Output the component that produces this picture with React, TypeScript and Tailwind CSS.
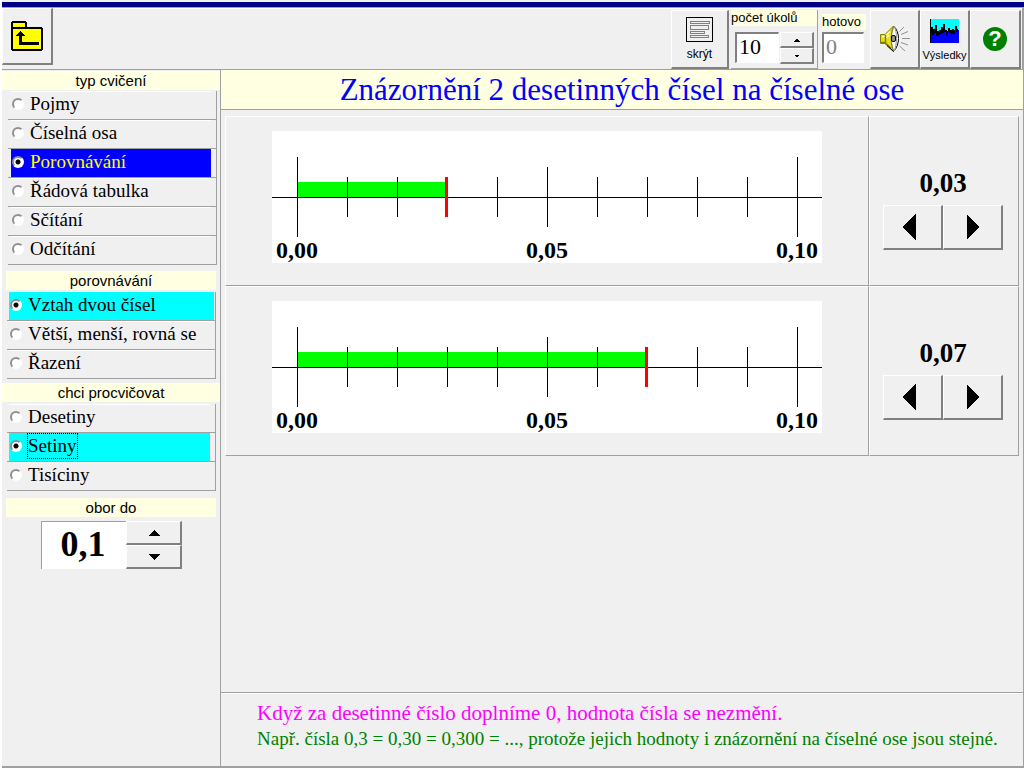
import { useState } from "react";
import clsx from "clsx";

const raised =
  "bg-[#f0f0f0] border-t border-l border-r-2 border-b-2 border-t-white border-l-white border-r-[#808080] border-b-[#808080] active:border-t-[#808080] active:border-l-[#808080]";

const sunken =
  "bg-white border-t-2 border-l-2 border-r border-b border-t-[#808080] border-l-[#808080] border-r-white border-b-white outline-none";

type RadioListProps = {
  name: string;
  title: string;
  items: string[];
  value: string;
  onChange: (v: string) => void;
  // primary list is highlighted in blue, the others in cyan
  primary?: boolean;
  focused?: boolean;
};

function RadioList({ name, title, items, value, onChange, primary, focused }: RadioListProps) {
  return (
    <section role="radiogroup" aria-label={title}>
      <Heading wide={name !== "relation"}>{title}</Heading>
      <div className={clsx("border-r border-[#a0a0a0]", primary ? "mt-px mr-[3px] ml-1.5" : "mt-0.5 mr-1 ml-[5px]")}>
        {items.map((item) => {
          const active = item === value;
          return (
            <label key={item} className="flex h-[29px] border-b border-[#a0a0a0]">
              <span
                className={clsx(
                  "flex flex-1 items-center gap-1.5 border-t pb-[3px] text-[19px] leading-6",
                  primary ? "ml-[3px] pl-px" : "ml-0.5 pl-px",
                  primary || focused ? "mr-[5px]" : "mr-px",
                  active
                    ? primary
                      ? "border-t-[#0000ff] bg-[#0000ff] text-[#ffff00]"
                      : "border-t-[#00ffff] bg-[#00ffff]"
                    : "border-t-white"
                )}
              >
                <input
                  type="radio"
                  name={name}
                  checked={active}
                  onChange={() => onChange(item)}
                  className="size-3 shrink-0 appearance-none rounded-full border-2 border-t-[#909090] border-l-[#909090] border-r-white border-b-white bg-white outline-none checked:bg-[radial-gradient(circle,#000_2px,#fff_3px)]"
                />
                <span className={clsx(active && focused && "outline-1 outline-dotted outline-black")}>{item}</span>
              </span>
            </label>
          );
        })}
      </div>
    </section>
  );
}

function Heading({ children, wide }: { children: string; wide?: boolean }) {
  return (
    <h2
      className={clsx(
        "h-[19px] bg-[#ffffe1] text-center font-['Liberation_Sans'] text-[15px] leading-[19px]",
        wide ? "" : "mx-1"
      )}
    >
      {children}
    </h2>
  );
}

function Triangle({ dir, size }: { dir: "up" | "down" | "left" | "right"; size: number }) {
  const points = {
    up: "0,9 6,3 12,9",
    down: "0,3 6,9 12,3",
    left: "9,0 3,6 9,12",
    right: "3,0 9,6 3,12",
  };
  return (
    <svg width={size} height={size} viewBox="0 0 12 12" shapeRendering="crispEdges" aria-hidden="true">
      <polygon points={points[dir]} />
    </svg>
  );
}

function NumberLine({ value }: { value: number }) {
  const ticks = Array.from({ length: 11 }, (_, i) => i);
  const end = 25 + value * 50;
  return (
    <svg viewBox="0 0 550 132" className="w-[550px] max-w-full bg-white" role="img" aria-label="číselná osa">
      <g shapeRendering="crispEdges">
        <rect x="25" y="51" width={value * 50} height="15" fill="#00ff00" />
        <rect x="0" y="66" width="550" height="1" />
        {ticks.map((i) => {
          const half = i % 10 === 0 ? 40 : i === 5 ? 30 : 20;
          return i === value ? null : <rect key={i} x={25 + i * 50} y={66 - half} width="1" height={half * 2} />;
        })}
        <rect x={end - 2} y="46" width="3" height="40" fill="#ff0000" />
      </g>
      <g className="font-['Liberation_Serif'] text-2xl font-bold" textAnchor="middle">
        <text x="25" y="127">0,00</text>
        <text x="275" y="127">0,05</text>
        <text x="525" y="127">0,10</text>
      </g>
    </svg>
  );
}

function LineRow({ value, onChange }: { value: number; onChange: (v: number) => void }) {
  return (
    <div className="grid grid-cols-[1fr_150px]">
      <div className="flex justify-center border-t border-l border-r border-b border-t-white border-l-white border-r-[#a0a0a0] border-b-[#a0a0a0] pt-3.5 pb-[22px]">
        <NumberLine value={value} />
      </div>
      <div className="flex flex-col items-center border-t border-l border-r border-b border-t-white border-l-white border-r-[#a0a0a0] border-b-[#a0a0a0] pt-[50px] pr-0.5">
        <output className="text-[27px] leading-8 font-bold">0,{String(value).padStart(2, "0")}</output>
        <div className="mt-1.5 flex">
          <button
            aria-label="méně"
            onClick={() => onChange(Math.max(0, value - 1))}
            className={clsx(raised, "flex h-[45px] w-[60px] items-center justify-center pr-2")}
          >
            <Triangle dir="left" size={26} />
          </button>
          <button
            aria-label="více"
            onClick={() => onChange(Math.min(9, value + 1))}
            className={clsx(raised, "flex h-[45px] w-[60px] items-center justify-center")}
          >
            <Triangle dir="right" size={26} />
          </button>
        </div>
      </div>
    </div>
  );
}

function FolderUpIcon() {
  return (
    <svg width="32" height="30" viewBox="0 0 32 30" shapeRendering="crispEdges" aria-hidden="true">
      <path d="M1 28V2L2 1H14L15 2V7H30L31 8V28L30 29H2Z" fill="#ffff00" stroke="#000" strokeWidth="2" />
      <path d="M1 7H15" stroke="#000" strokeWidth="2" />
      <path d="M9 12V22H28" fill="none" stroke="#000" strokeWidth="3" />
      <path d="M4 15L9 10L14 15Z" />
    </svg>
  );
}

function LinesIcon() {
  return (
    <svg width="27" height="25" viewBox="0 0 27 25" shapeRendering="crispEdges" aria-hidden="true">
      <rect x="0.5" y="0.5" width="26" height="24" fill="none" stroke="#000" />
      <g fill="none" stroke="#808080">
        <rect x="4.5" y="4.5" width="19" height="2" />
        <rect x="4.5" y="8.5" width="18" height="4" />
        <rect x="4.5" y="14.5" width="14" height="2" />
        <rect x="4.5" y="18.5" width="18" height="2" />
      </g>
    </svg>
  );
}

function SpeakerIcon() {
  return (
    <svg width="32" height="28" viewBox="0 0 32 28" aria-hidden="true">
      {/* front rim, then the cone over it */}
      <path d="M14.5 1C18 4 19.5 9 19.5 13.5S18 23 14.5 26.5" fill="#fff" stroke="#000" />
      <path d="M15 2C11.5 8 11.5 20 15 26C18 22 18.5 5 15 2Z" fill="#fff" stroke="#909090" />
      <path d="M1.5 9.5H6L14.5 1C11.5 8 11.5 20 14.5 26.5L6 18.5H1.5Z" fill="#e8dc20" stroke="#808000" />
      <path d="M3 11.5H6L11 6.5M7 13L10.5 10" fill="none" stroke="#ffffb0" strokeWidth="1.5" />
      <path d="M2 17.5H6L12 23.5M6.5 10V18" fill="none" stroke="#808000" strokeWidth="1.5" />
      <path d="M8 20.5L14.5 26.5" stroke="#000" />
      <rect x="12.5" y="10.5" width="4" height="6" rx="1.5" fill="#909090" stroke="#000" />
      <path d="M20.5 6.5L25 2M22 9.5L29 6.5M23 13.5H31M22 17.5L29 20M20.5 21L26 26" fill="none" stroke="#909090" />
    </svg>
  );
}

function WaveIcon() {
  return (
    <svg width="29" height="24" viewBox="0 0 29 24" shapeRendering="crispEdges" aria-hidden="true">
      <rect width="29" height="24" fill="#00ffff" />
      <path
        d="M0 24V12L2 9L3 14L5 10L6 8L7 15L9 12L11 14L12 9L14 8L15 12L17 15L19 11L20 14L22 12L24 13L26 9L27 12L29 11V24Z"
        fill="#0000ff"
      />
      <path
        d="M1 14L2 8L3 16L4 10L5 14L6 6L7 17L8 12L9 16L10 11L11 15L12 8L13 14L14 5L15 13L16 11L17 17L18 12L19 9L20 14L21 11L22 15L23 10L24 15L25 11L26 7L27 13L28 10"
        fill="none"
        stroke="#000"
      />
      <path d="M0 24V0" stroke="#000" />
    </svg>
  );
}

export default function App() {
  const [exercise, setExercise] = useState("Porovnávání");
  const [relation, setRelation] = useState("Vztah dvou čísel");
  const [practice, setPractice] = useState("Setiny");
  const [tasks, setTasks] = useState(10);
  const [first, setFirst] = useState(3);
  const [second, setSecond] = useState(7);

  return (
    <div className="flex min-h-screen flex-col border-l-2 border-white bg-[#f0f0f0] pt-0.5 font-['Liberation_Serif',serif] text-black">
      <div className="h-[5px] bg-[#000084]" />

      {/* toolbar */}
      <header className="flex h-[63px] border-t border-r-2 border-b border-[#a0a0a0] font-['Liberation_Sans'] shadow-[inset_0_1px_#fff]">
        <button aria-label="zpět" className={clsx(raised, "flex h-[57px] w-[51px] items-center justify-center")}>
          <FolderUpIcon />
        </button>
        <div className="mr-px ml-auto flex pt-0.5">
          <button className={clsx(raised, "flex w-[58px] flex-col items-center pt-1.5 text-xs leading-4")}>
            <LinesIcon />
            <span className="mt-1">skrýt</span>
          </button>

          <div className="ml-0.5 w-[87px] border-r border-b border-[#a0a0a0]">
            <label htmlFor="tasks" className="block h-4 bg-[#ffffe1] text-[13px] leading-4">
              počet úkolů
            </label>
            <div className="mt-1.5 ml-1 flex gap-px">
              <input
                id="tasks"
                value={tasks}
                onChange={(e) => setTasks(Number(e.target.value) || 0)}
                className={clsx(sunken, "h-[31px] w-11 pb-1 pl-0.5 font-['Liberation_Serif'] text-[22px]")}
              />
              <div className="flex flex-col">
                <button
                  aria-label="více úkolů"
                  onClick={() => setTasks(tasks + 1)}
                  className={clsx(raised, "flex h-4 w-[34px] items-center justify-center")}
                >
                  <Triangle dir="up" size={6} />
                </button>
                <button
                  aria-label="méně úkolů"
                  onClick={() => setTasks(Math.max(1, tasks - 1))}
                  className={clsx(raised, "flex h-4 w-[34px] items-center justify-center")}
                >
                  <Triangle dir="down" size={6} />
                </button>
              </div>
            </div>
          </div>

          <div className="mx-1 w-11 pt-1">
            <label htmlFor="done" className="block h-4 bg-[#ffffe1] text-[13px] leading-4">
              hotovo
            </label>
            <input
              id="done"
              readOnly
              value="0"
              className={clsx(
                sunken,
                "mt-0.5 h-[31px] w-[42px] pb-1 pl-0.5 font-['Liberation_Serif'] text-[22px] text-[#808080]"
              )}
            />
          </div>

          <button aria-label="zvuk" className={clsx(raised, "flex w-[50px] items-center justify-center")}>
            <SpeakerIcon />
          </button>
          <button className={clsx(raised, "flex w-[50px] flex-col items-center pt-2 text-[11px] leading-4")}>
            <WaveIcon />
            <span className="mt-1">Výsledky</span>
          </button>
          <button aria-label="nápověda" className={clsx(raised, "flex w-[51px] items-center justify-center")}>
            <span className="flex size-6 items-center justify-center rounded-full bg-[#008000] text-[22px] leading-6 font-bold text-white">
              ?
            </span>
          </button>
        </div>
      </header>

      <div className="flex flex-1 border-r border-b-2 border-[#a0a0a0]">
        <aside className="flex w-[219px] shrink-0 flex-col border-r border-[#a0a0a0] pt-px">
          <RadioList
            name="exercise"
            title="typ cvičení"
            items={["Pojmy", "Číselná osa", "Porovnávání", "Řádová tabulka", "Sčítání", "Odčítání"]}
            value={exercise}
            onChange={setExercise}
            primary
          />
          <div className="mt-1.5">
            <RadioList
              name="relation"
              title="porovnávání"
              items={["Vztah dvou čísel", "Větší, menší, rovná se", "Řazení"]}
              value={relation}
              onChange={setRelation}
            />
          </div>
          <div className="mt-1">
            <RadioList
              name="practice"
              title="chci procvičovat"
              items={["Desetiny", "Setiny", "Tisíciny"]}
              value={practice}
              onChange={setPractice}
              focused
            />
          </div>
          <div className="mt-[7px]">
            <Heading>obor do</Heading>
          </div>
          <div className="mt-1 ml-[39px] flex">
            <input
              aria-label="obor do"
              readOnly
              value="0,1"
              className="h-12 w-[85px] border-t border-l border-[#a0a0a0] bg-white pr-0.5 pb-1 text-center text-4xl font-bold outline-none"
            />
            <div className="flex flex-col">
              <button aria-label="větší obor" className={clsx(raised, "flex h-6 w-14 items-center justify-center")}>
                <Triangle dir="up" size={12} />
              </button>
              <button aria-label="menší obor" className={clsx(raised, "flex h-6 w-14 items-center justify-center")}>
                <Triangle dir="down" size={12} />
              </button>
            </div>
          </div>
        </aside>

        <main className="flex min-w-0 flex-1 flex-col">
          <h1 className="h-10 border-b border-[#a0a0a0] bg-[#ffffe1] text-center text-[31px] leading-10 text-[#0000ff]">
            Znázornění 2 desetinných čísel na číselné ose
          </h1>
          <div className="mx-1 mt-1.5">
            <LineRow value={first} onChange={setFirst} />
            <LineRow value={second} onChange={setSecond} />
          </div>
          <footer className="mt-auto border-t border-[#a0a0a0] pt-1.5 pr-4 pb-[15px] pl-9 shadow-[inset_0_1px_#fff]">
            <p className="text-[21px] leading-7 text-[#ff00ff]">
              Když za desetinné číslo doplníme 0, hodnota čísla se nezmění.
            </p>
            <p className="text-[19px] leading-6 text-[#008000]">
              Např. čísla 0,3 = 0,30 = 0,300 = ..., protože jejich hodnoty i znázornění na číselné ose jsou stejné.
            </p>
          </footer>
        </main>
      </div>
    </div>
  );
}
